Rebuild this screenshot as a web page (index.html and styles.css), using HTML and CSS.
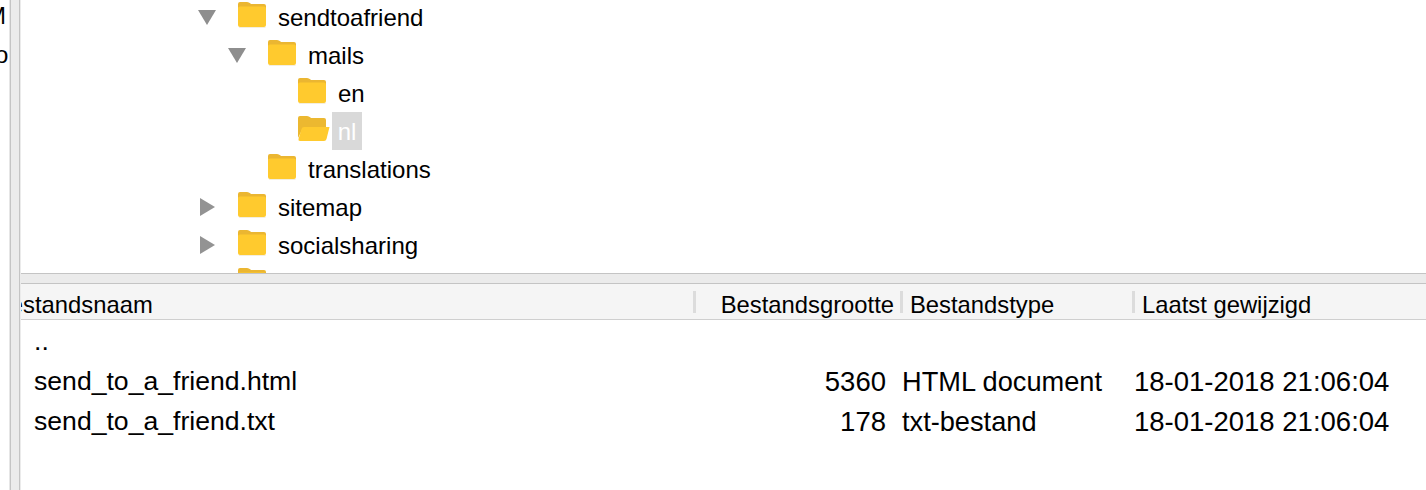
FILE: index.html
```html
<!DOCTYPE html>
<html lang="nl">
<head>
    <meta charset="UTF-8">
    <title>Bestanden</title>
    <link rel="stylesheet" href="styles.css">
</head>
<body>
    <svg class="defs" width="0" height="0">
        <symbol id="folder" viewBox="1 2 28 26">
            <path d="M1 8V4Q1 2 3 2H10Q12 2 13.500 3.500L14 4H27Q29 4 29 6V9H1Z" fill="#ebb631"/>
            <path d="M1 8Q1 6.500 3 6.500H27Q29 6.500 29 8.500V25Q29 27 27 27H3Q1 27 1 25Z" fill="#ffca2e"/>
            <path d="M2 27.500H28.500" stroke="#f3eee0" stroke-width="1"/>
        </symbol>
        <symbol id="folder-open" viewBox="1 2 32 26">
            <path d="M1 24V4Q1 2 3 2H10Q12 2 13.500 3.500L14 4H27Q29 4 29 6V14H6Z" fill="#ecb830"/>
            <path d="M7 13H32.500L29.500 25Q29 27 27 27H3Q1 27 1.500 25L4.500 15Q5 13 7 13Z" fill="#ffca2e"/>
        </symbol>
        <symbol id="arrow-down" viewBox="0 0 18 15">
            <path d="M0 0H18L9 15Z" fill="#8e8e8e"/>
        </symbol>
        <symbol id="arrow-right" viewBox="0 0 15 18">
            <path d="M0 0L15 9L0 18Z" fill="#939393"/>
        </symbol>
    </svg>

    <div class="sliver">
        <span class="sliver-m">M</span>
        <span class="sliver-o">o</span>
    </div>
    <div class="sash"></div>

    <div class="panes">
        <div class="tree">
            <div class="tree-row depth-0">
                <span class="twisty"><svg class="arrow-d"><use href="#arrow-down"/></svg></span>
                <svg class="icon"><use href="#folder"/></svg>
                <span class="label">sendtoafriend</span>
            </div>
            <div class="tree-row depth-1">
                <span class="twisty"><svg class="arrow-d"><use href="#arrow-down"/></svg></span>
                <svg class="icon"><use href="#folder"/></svg>
                <span class="label">mails</span>
            </div>
            <div class="tree-row depth-2">
                <span class="twisty"></span>
                <svg class="icon"><use href="#folder"/></svg>
                <span class="label">en</span>
            </div>
            <div class="tree-row depth-2">
                <span class="twisty"></span>
                <svg class="icon icon-open"><use href="#folder-open"/></svg>
                <span class="label selected">nl</span>
            </div>
            <div class="tree-row depth-1">
                <span class="twisty"></span>
                <svg class="icon"><use href="#folder"/></svg>
                <span class="label">translations</span>
            </div>
            <div class="tree-row depth-0">
                <span class="twisty"><svg class="arrow-r"><use href="#arrow-right"/></svg></span>
                <svg class="icon"><use href="#folder"/></svg>
                <span class="label">sitemap</span>
            </div>
            <div class="tree-row depth-0">
                <span class="twisty"><svg class="arrow-r"><use href="#arrow-right"/></svg></span>
                <svg class="icon"><use href="#folder"/></svg>
                <span class="label">socialsharing</span>
            </div>
            <div class="tree-row depth-0">
                <span class="twisty"></span>
                <svg class="icon"><use href="#folder"/></svg>
            </div>
        </div>

        <div class="files">
            <div class="file-head">
                <div class="col-name head-cell head-first"><span class="head-name">Bestandsnaam</span></div>
                <div class="col-size head-cell head-size">Bestandsgrootte</div>
                <div class="col-type head-cell head-sep">Bestandstype</div>
                <div class="col-date head-cell head-sep">Laatst gewijzigd</div>
            </div>
            <div class="file-row row-up">
                <div class="col-name">..</div>
            </div>
            <div class="file-row">
                <div class="col-name">send_to_a_friend.html</div>
                <div class="col-size">5360</div>
                <div class="col-type">HTML document</div>
                <div class="col-date">18-01-2018 21:06:04</div>
            </div>
            <div class="file-row">
                <div class="col-name">send_to_a_friend.txt</div>
                <div class="col-size">178</div>
                <div class="col-type">txt-bestand</div>
                <div class="col-date">18-01-2018 21:06:04</div>
            </div>
        </div>
    </div>
</body>
</html>
```

FILE: styles.css
```css
html, body {
    margin: 0;
    height: 490px;
    overflow: hidden;
}

body {
    display: flex;
    background-color: #fff;
    color: #000;
    font-family: "Liberation Sans", Arial, sans-serif;
    font-size: 24px;
}

.defs {
    position: absolute;
}

.sliver {
    width: 9px;
    flex: none;
    overflow: hidden;
    line-height: 38px;
}

.sliver span {
    display: block;
    white-space: nowrap;
}

.sliver-m {
    margin-top: -3px;
    margin-left: -14px;
}

.sliver-o {
    margin-top: 1px;
    margin-left: -5px;
}

.sash {
    width: 9px;
    flex: none;
    background-color: #ebebeb;
    border-left: 1px solid #e6e6e6;
    border-right: 1px solid #c4c4c4;
    box-shadow: inset 1px 0 0 #c4c4c4;
}

.panes {
    flex: 1;
    min-width: 0;
    display: flex;
    flex-direction: column;
    background-color: #ebebeb;
    padding-left: 1px;
}

.tree {
    height: 273px;
    flex: none;
    overflow: hidden;
    background-color: #fff;
    border-bottom: 1px solid #c4c4c4;
}

.tree-row {
    height: 38px;
    display: flex;
    align-items: center;
}

.tree-row:first-child {
    margin-top: -2px;
}

.depth-0 {
    padding-left: 177px;
}

.depth-1 {
    padding-left: 207px;
}

.depth-2 {
    padding-left: 237px;
}

.twisty {
    width: 40px;
    flex: none;
    display: flex;
    align-items: center;
}

.arrow-d {
    width: 18px;
    height: 15px;
}

.arrow-r {
    width: 15px;
    height: 18px;
    margin-left: 2px;
}

.icon {
    width: 28px;
    height: 26px;
    flex: none;
    margin-right: 12px;
    margin-bottom: 4px;
}

.icon-open {
    width: 32px;
    margin-right: 2px;
}

.label {
    height: 38px;
    line-height: 40px;
    white-space: nowrap;
}

.selected {
    width: 30px;
    background-color: #d9d9d9;
    color: #fff;
    text-align: center;
}

.files {
    flex: 1;
    margin-top: 9px;
    background-color: #fff;
    border-top: 1px solid #c4c4c4;
    overflow: hidden;
}

.file-head,
.file-row {
    display: grid;
    grid-template-columns: 672px 207px 232px 1fr;
}

.file-head {
    height: 35px;
    align-items: center;
    background-color: #f5f5f5;
    border-bottom: 1px solid #cfcfcf;
    font-size: 23.8px;
}

.head-cell {
    height: 22px;
    line-height: 27px;
    white-space: nowrap;
}

.head-first {
    overflow: hidden;
}

.head-name {
    margin-left: -27px;
}

.head-size {
    text-align: right;
    padding-right: 6px;
    border-left: 3px solid #dcdcdc;
}

.head-sep {
    border-left: 3px solid #dcdcdc;
    padding-left: 7px;
}

.file-row {
    height: 40px;
    line-height: 39px;
    font-size: 26.6px;
}

.row-up {
    margin-top: 2px;
}

.col-name {
    white-space: nowrap;
}

.file-row .col-name {
    padding-left: 13px;
}

.file-row .col-size {
    text-align: right;
    padding-right: 14px;
    font-size: 27.5px;
}

.file-row .col-type {
    padding-left: 2px;
    font-size: 27.2px;
}

.file-row .col-date {
    padding-left: 2px;
    font-size: 27.5px;
}
```
